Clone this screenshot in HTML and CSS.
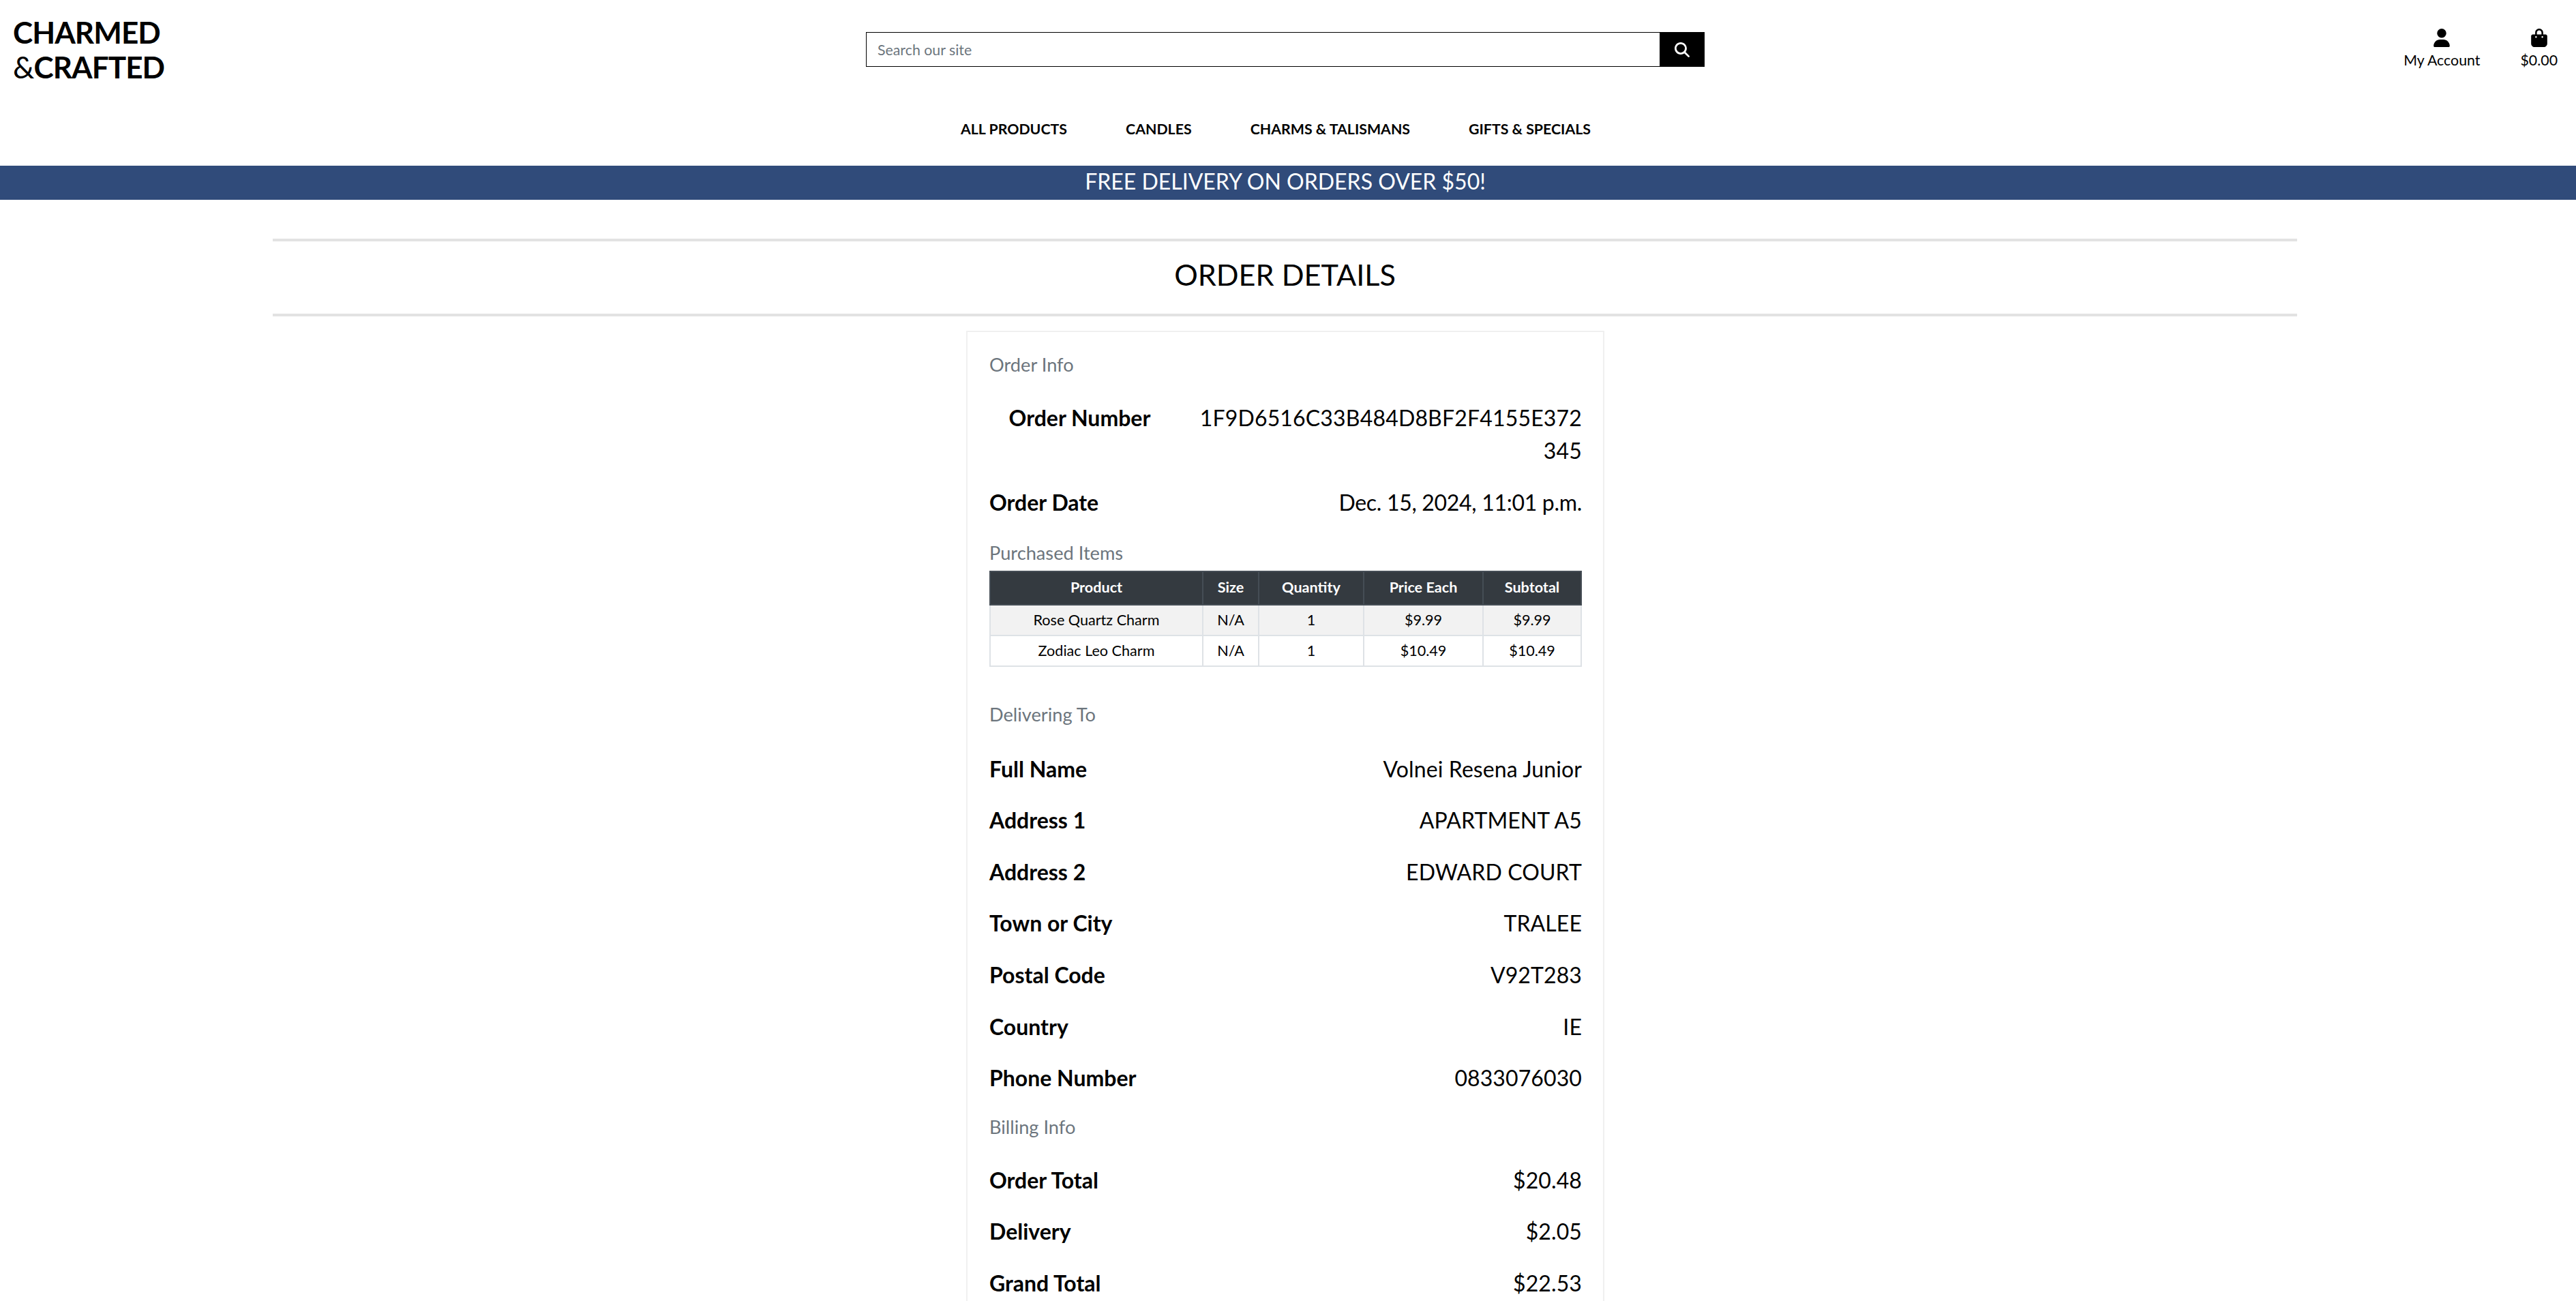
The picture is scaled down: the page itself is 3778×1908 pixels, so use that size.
FILE: index.html
```html
<!DOCTYPE html>
<html lang="en">
<head>
  <meta charset="UTF-8" />
  <title>Charmed &amp; Crafted</title>
  <link rel="stylesheet" href="styles.css">
</head>
<body>
  <header class="site-header">
    <div class="top-row">
      <a class="logo" href="#">CHARMED<br><span class="logo-amp">&amp;</span>CRAFTED</a>
      <form class="search">
        <input type="text" placeholder="Search our site" />
        <button type="button" aria-label="Search">
          <svg viewBox="0 0 512 512"><path d="M416 208c0 45.9-14.9 88.3-40 122.7L502.6 457.4c12.5 12.5 12.5 32.8 0 45.3s-32.8 12.5-45.3 0L330.7 376c-34.4 25.2-76.8 40-122.7 40C93.1 416 0 322.9 0 208S93.1 0 208 0S416 93.1 416 208zM208 352a144 144 0 1 0 0-288 144 144 0 1 0 0 288z"/></svg>
        </button>
      </form>
      <div class="header-links">
        <a class="header-link" href="#">
          <svg viewBox="0 0 448 512"><path d="M224 256A128 128 0 1 0 224 0a128 128 0 1 0 0 256zm-45.7 48C79.8 304 0 383.8 0 482.3C0 498.7 13.3 512 29.7 512H418.3c16.4 0 29.7-13.3 29.7-29.7C448 383.8 368.2 304 269.7 304H178.3z"/></svg>
          <span>My Account</span>
        </a>
        <a class="header-link" href="#">
          <svg viewBox="0 0 448 512"><path d="M160 112c0-35.3 28.7-64 64-64s64 28.7 64 64v48H160V112zm-48 48H48c-26.5 0-48 21.5-48 48V416c0 53 43 96 96 96H352c53 0 96-43 96-96V208c0-26.5-21.5-48-48-48H336V112C336 50.1 285.9 0 224 0S112 50.1 112 112v48zm24 48a24 24 0 1 1 0 48 24 24 0 1 1 0-48zm152 24a24 24 0 1 1 48 0 24 24 0 1 1 -48 0z"/></svg>
          <span>$0.00</span>
        </a>
      </div>
    </div>
    <nav class="main-nav">
      <a href="#">ALL PRODUCTS</a>
      <a href="#">CANDLES</a>
      <a href="#">CHARMS &amp; TALISMANS</a>
      <a href="#">GIFTS &amp; SPECIALS</a>
    </nav>
    <div class="banner">FREE DELIVERY ON ORDERS OVER $50!</div>
  </header>

  <main class="content">
    <h1 class="page-title">ORDER DETAILS</h1>

    <section class="order-card">
      <p class="section-label">Order Info</p>
      <div class="row row-number">
        <strong>Order Number</strong>
        <span>1F9D6516C33B484D8BF2F4155E372345</span>
      </div>
      <div class="row row-date">
        <strong>Order Date</strong>
        <span>Dec. 15, 2024, 11:01 p.m.</span>
      </div>

      <p class="section-label label-items">Purchased Items</p>
      <table class="items">
        <thead>
          <tr>
            <th class="col-product">Product</th>
            <th class="col-size">Size</th>
            <th class="col-qty">Quantity</th>
            <th class="col-price">Price Each</th>
            <th>Subtotal</th>
          </tr>
        </thead>
        <tbody>
          <tr>
            <td>Rose Quartz Charm</td>
            <td>N/A</td>
            <td>1</td>
            <td>$9.99</td>
            <td>$9.99</td>
          </tr>
          <tr>
            <td>Zodiac Leo Charm</td>
            <td>N/A</td>
            <td>1</td>
            <td>$10.49</td>
            <td>$10.49</td>
          </tr>
        </tbody>
      </table>

      <p class="section-label label-delivery">Delivering To</p>
      <div class="row"><strong>Full Name</strong><span>Volnei Resena Junior</span></div>
      <div class="row"><strong>Address 1</strong><span>APARTMENT A5</span></div>
      <div class="row"><strong>Address 2</strong><span>EDWARD COURT</span></div>
      <div class="row"><strong>Town or City</strong><span>TRALEE</span></div>
      <div class="row"><strong>Postal Code</strong><span>V92T283</span></div>
      <div class="row"><strong>Country</strong><span>IE</span></div>
      <div class="row"><strong>Phone Number</strong><span>0833076030</span></div>

      <p class="section-label label-billing">Billing Info</p>
      <div class="row"><strong>Order Total</strong><span>$20.48</span></div>
      <div class="row"><strong>Delivery</strong><span>$2.05</span></div>
      <div class="row"><strong>Grand Total</strong><span>$22.53</span></div>
    </section>
  </main>
</body>
</html>
```

FILE: styles.css
```css
html, body {
  height: 100%;
  overflow: hidden;
}
body {
  margin: 0;
  font-family: Lato, "Liberation Sans", sans-serif;
  font-size: 32px;
  line-height: 1.5;
  color: #000;
  background: #fff;
}
a {
  color: inherit;
  text-decoration: none;
}

/* header */
.top-row {
  display: grid;
  grid-template-columns: 1270px 1230px 1fr;
  height: 150px;
  padding-right: 27px;
}
.logo {
  padding: 22px 0 0 19px;
  font-size: 44px;
  font-weight: 700;
  line-height: 51px;
  letter-spacing: -0.9px;
}
.logo-amp {
  font-weight: 400;
}
.search {
  display: flex;
  height: 51px;
  margin-top: 47px;
}
.search input {
  flex: 1;
  min-width: 0;
  padding: 0 16px;
  border: 1px solid #000;
  border-right: 0;
  border-radius: 0;
  font-family: inherit;
  font-size: 21.33px;
  outline: none;
}
.search input::placeholder {
  color: #6c757d;
}
.search button {
  display: flex;
  align-items: center;
  justify-content: center;
  width: 66px;
  padding: 0;
  border: 0;
  background: #000;
}
.search svg {
  width: 22px;
  height: 22px;
  fill: #fff;
}
.header-links {
  display: flex;
  justify-content: flex-end;
  gap: 59px;
  padding-top: 42px;
}
.header-link {
  display: flex;
  flex-direction: column;
  align-items: center;
  font-size: 21.33px;
  line-height: 38px;
}
.header-link svg {
  display: block;
  width: 24px;
  height: 27px;
  fill: #000;
}
.main-nav {
  display: flex;
  justify-content: center;
  gap: 86px;
  height: 93px;
  padding-right: 36px;
  font-size: 21.33px;
  font-weight: 700;
  line-height: 78px;
}
.banner {
  height: 50px;
  padding-right: 8px;
  background: #304b7a;
  color: #fff;
  font-size: 32px;
  line-height: 46px;
  text-align: center;
}

/* order */
.content {
  width: 2969px;
  margin: 57px 0 0 400px;
}
.page-title {
  height: 106px;
  margin: 0;
  border-top: 4px solid #e2e2e2;
  border-bottom: 4px solid #e2e2e2;
  font-size: 43.2px;
  font-weight: 400;
  line-height: 96px;
  text-align: center;
}
.order-card {
  width: 936px;
  box-sizing: border-box;
  margin: 21px 0 0 1017px;
  padding: 29px 31px 100px 32px;
  border: 2px solid #f0f0f0;
}
.section-label {
  margin: 0;
  color: #6c757d;
  font-size: 27.2px;
  line-height: 38px;
}
.row {
  display: grid;
  grid-template-columns: 265px 1fr;
  margin-bottom: 27.6px;
  gap: 40px;
}
.row strong {
  font-weight: 700;
}
.row span {
  text-align: right;
  overflow-wrap: anywhere;
  letter-spacing: 0.1px;
}
.row-number {
  margin-top: 35px;
}
.row-number strong {
  text-align: center;
}
.row-number span {
  letter-spacing: 0.17px;
}
.row-date span {
  letter-spacing: -0.3px;
}
.label-items {
  margin-top: 31px;
}
.items {
  width: 100%;
  margin-top: 7px;
  border-collapse: collapse;
  table-layout: fixed;
  font-size: 21.6px;
  line-height: 33px;
  text-align: center;
}
.items th, .items td {
  box-sizing: border-box;
}
.items th {
  padding: 6px 0 8px;
  border: 2px solid #454d55;
  background: #343a40;
  color: #fff;
  font-weight: 700;
}
.items td {
  padding: 5px 0;
  border: 2px solid #dee2e6;
}
.items tbody tr:nth-child(odd) {
  background: #f2f2f2;
}
.col-product { width: 312px; }
.col-size { width: 82px; }
.col-qty { width: 154px; }
.col-price { width: 175px; }
.label-delivery {
  margin-top: 51px;
  margin-bottom: 37px;
}
.label-billing {
  margin-top: 29px;
  margin-bottom: 34.6px;
}
```
